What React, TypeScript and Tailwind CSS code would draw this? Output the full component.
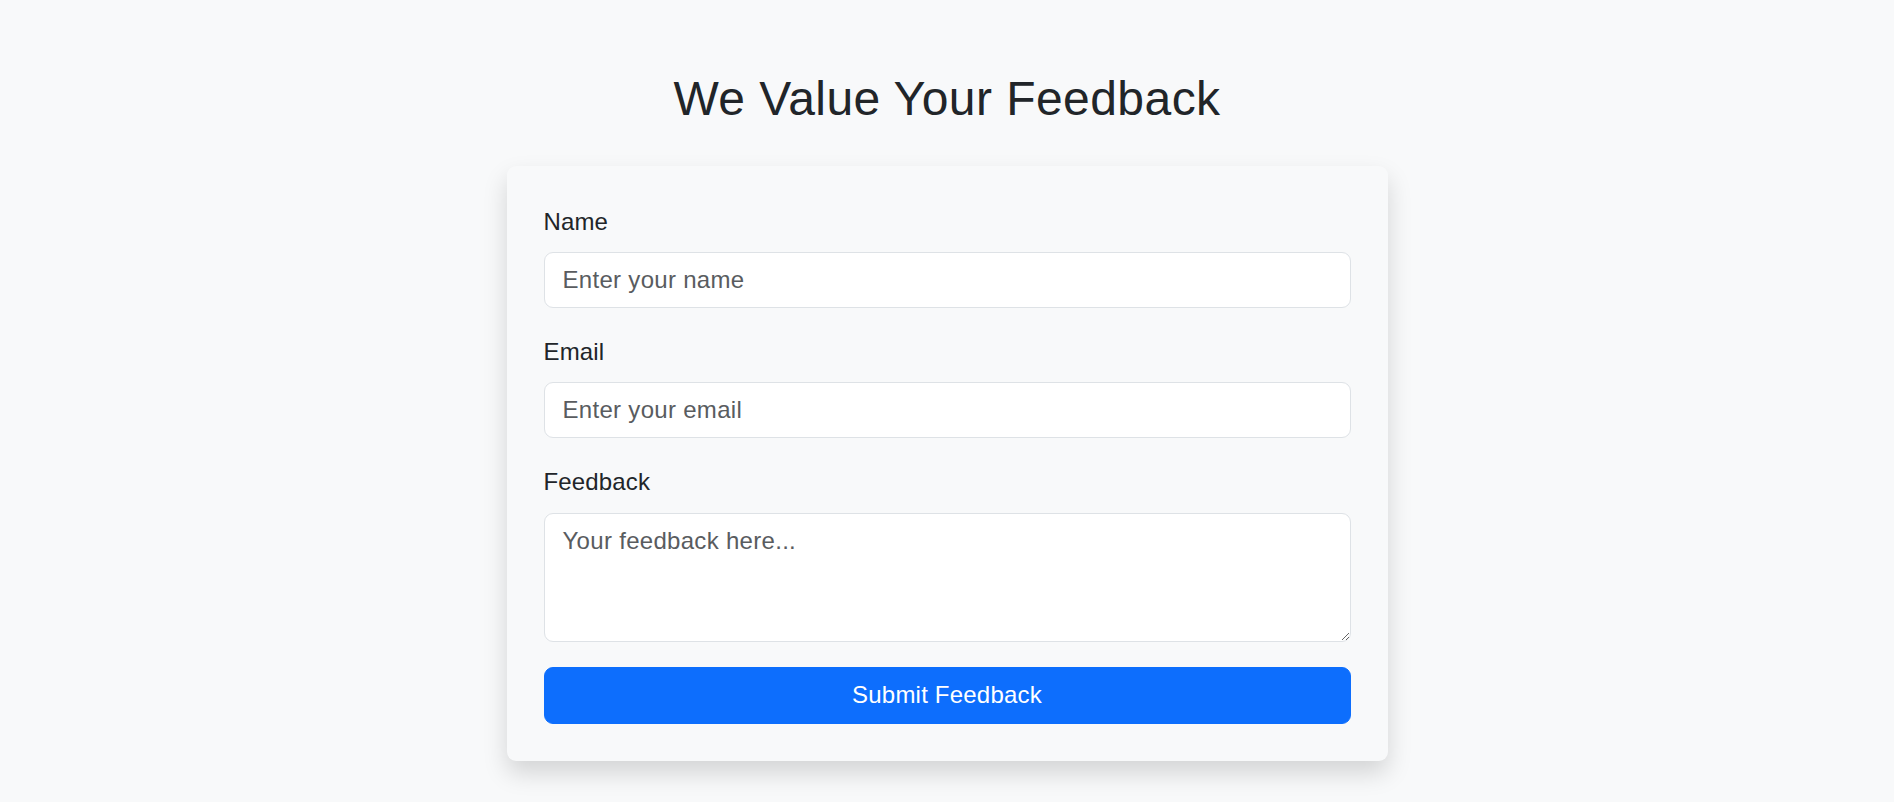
export default function App() {
  const label = "block text-[24px] leading-[36px] tracking-[0.15px] text-[#212529] mb-[12px]";
  const field =
    "block w-full bg-white border border-[#dee2e6] rounded-[9px] px-[18px] py-[9px] text-[24px] leading-[36px] tracking-[0.3px] text-[#212529] placeholder:text-[#595c5f] outline-none";

  return (
    <div
      className="min-h-screen bg-[#f8f9fa] flex flex-col items-center pt-[70px] pb-[40px]"
      style={{ fontFamily: '"Liberation Sans", Arial, sans-serif' }}
    >
      <h2 className="text-[48px] leading-[57.6px] tracking-[0.45px] text-[#212529] font-normal mb-[38px]">
        We Value Your Feedback
      </h2>
      <form
        className="w-[881px] bg-[#f8f9fa] rounded-[9px] shadow-[0_12px_24px_rgba(0,0,0,0.15)] pt-[38px] px-[37px] pb-[37px]"
        onSubmit={(e) => e.preventDefault()}
      >
        <div className="mb-[26px]">
          <label className={label}>Name</label>
          <input type="text" className={`${field} h-[56px]`} placeholder="Enter your name" />
        </div>
        <div className="mb-[26px]">
          <label className={label}>Email</label>
          <input type="email" className={`${field} h-[56px]`} placeholder="Enter your email" />
        </div>
        <div className="mb-[25px]">
          <label className={`${label} mb-[13px]`}>Feedback</label>
          <textarea rows={3} className={`${field} h-[129px]`} placeholder="Your feedback here..." />
        </div>
        <button
          type="submit"
          className="block w-full h-[57px] bg-[#0d6efd] text-white text-[24px] leading-[36px] tracking-[0.2px] rounded-[9px] border border-[#0d6efd]"
        >
          Submit Feedback
        </button>
      </form>
    </div>
  );
}
